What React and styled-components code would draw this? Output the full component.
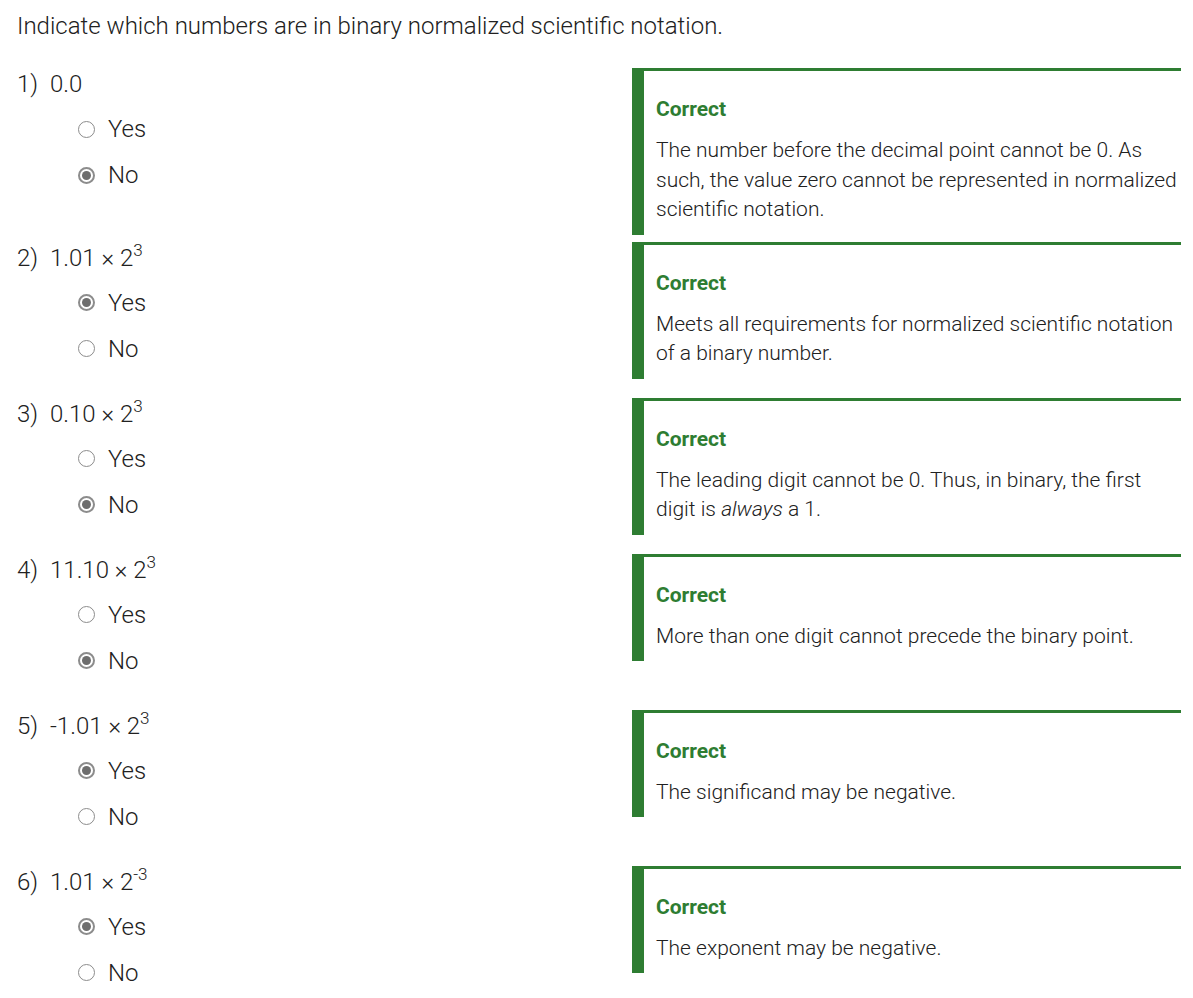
import React from "react";
import styled, { createGlobalStyle } from "styled-components";

const GlobalStyle = createGlobalStyle`
  html, body {
    margin: 0;
    padding: 0;
    background: #ffffff;
  }
  body {
    font-family: "Roboto Light", Roboto, "Noto Sans", "Liberation Sans", sans-serif;
    font-weight: 300;
    color: #212121;
  }
`;

const Page = styled.div`
  padding: 10px 12px 0 17px;
`;

const Title = styled.h1`
  margin: 0 0 26px 0;
  font-size: 24px;
  line-height: 32px;
  font-weight: 300;
`;

const List = styled.div`
  display: flex;
  flex-direction: column;
`;

const Row = styled.div`
  display: grid;
  grid-template-columns: 615px 1fr;
  align-items: start;
`;

const Question = styled.div`
  min-height: 156px;
  display: flex;
  flex-direction: column;
`;

const Prompt = styled.div`
  font-size: 24px;
  line-height: 32px;
  display: flex;
`;

const Num = styled.span`
  width: 33px;
  flex: none;
`;

const Sup = styled.sup`
  font-size: 17px;
  line-height: 0;
  position: relative;
  top: -1px;
`;

const Options = styled.div`
  margin-top: 6px;
  padding-left: 61px;
  display: flex;
  flex-direction: column;
`;

const Option = styled.label`
  height: 46px;
  display: flex;
  align-items: center;
  gap: 13px;
  font-size: 24px;
`;

const Radio = styled.span`
  width: 17px;
  height: 17px;
  box-sizing: border-box;
  border-radius: 50%;
  border: ${(p) => (p.$checked ? "2px solid #8c8c8c" : "1.5px solid #8c8c8c")};
  display: inline-flex;
  align-items: center;
  justify-content: center;
  &::after {
    content: "";
    width: 9px;
    height: 9px;
    border-radius: 50%;
    background: ${(p) => (p.$checked ? "#6e6e6e" : "transparent")};
  }
`;

const Feedback = styled.div`
  border-top: 3px solid #2e7d32;
  border-left: 12px solid #2e7d32;
  padding: 23px 0 10px 12px;
  margin-bottom: 7px;
`;

const Verdict = styled.div`
  color: #2e7d32;
  font-family: Roboto, "Noto Sans", sans-serif;
  font-weight: 700;
  font-size: 21px;
  line-height: 30px;
  margin-bottom: 12px;
`;

const Explanation = styled.div`
  font-size: 21px;
  line-height: 29.5px;
`;

const questions = [
  {
    n: "1)",
    expr: <>0.0</>,
    answer: "No",
    text: (
      <>
        The number before the decimal point cannot be 0. As such, the value zero
        cannot be represented in normalized scientific notation.
      </>
    ),
  },
  {
    n: "2)",
    expr: (
      <>
        1.01 × 2<Sup>3</Sup>
      </>
    ),
    answer: "Yes",
    text: <>Meets all requirements for normalized scientific notation of a binary number.</>,
  },
  {
    n: "3)",
    expr: (
      <>
        0.10 × 2<Sup>3</Sup>
      </>
    ),
    answer: "No",
    text: (
      <>
        The leading digit cannot be 0. Thus, in binary, the first digit is <em>always</em> a 1.
      </>
    ),
  },
  {
    n: "4)",
    expr: (
      <>
        11.10 × 2<Sup>3</Sup>
      </>
    ),
    answer: "No",
    text: <>More than one digit cannot precede the binary point.</>,
  },
  {
    n: "5)",
    expr: (
      <>
        -1.01 × 2<Sup>3</Sup>
      </>
    ),
    answer: "Yes",
    text: <>The significand may be negative.</>,
  },
  {
    n: "6)",
    expr: (
      <>
        1.01 × 2<Sup>-3</Sup>
      </>
    ),
    answer: "Yes",
    text: <>The exponent may be negative.</>,
  },
];

export default function App() {
  return (
    <>
      <GlobalStyle />
      <Page>
        <Title>Indicate which numbers are in binary normalized scientific notation.</Title>
        <List>
          {questions.map((q) => (
            <Row key={q.n}>
              <Question>
                <Prompt>
                  <Num>{q.n}</Num>
                  <span>{q.expr}</span>
                </Prompt>
                <Options>
                  {["Yes", "No"].map((o) => (
                    <Option key={o}>
                      <Radio $checked={q.answer === o} />
                      {o}
                    </Option>
                  ))}
                </Options>
              </Question>
              <Feedback>
                <Verdict>Correct</Verdict>
                <Explanation>{q.text}</Explanation>
              </Feedback>
            </Row>
          ))}
        </List>
      </Page>
    </>
  );
}
